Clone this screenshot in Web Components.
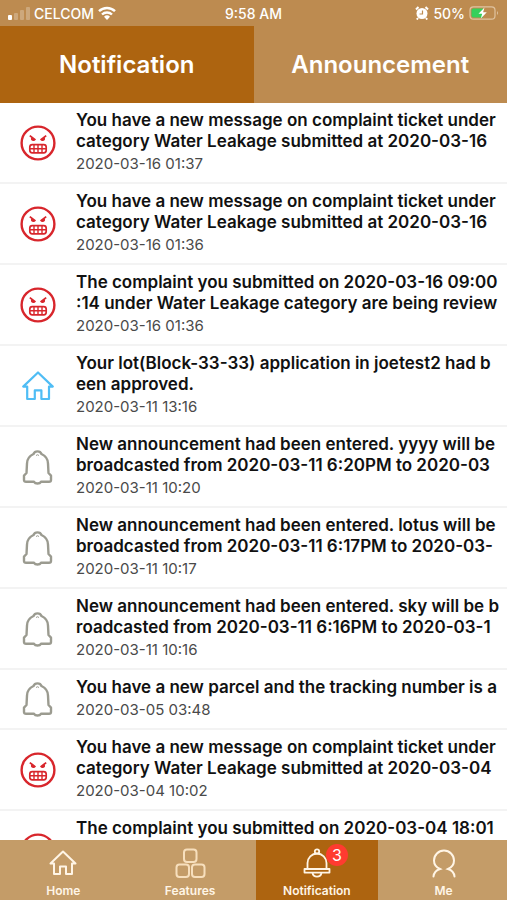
<!DOCTYPE html>
<html lang="en">
<head>
<meta charset="utf-8">
<meta name="viewport" content="width=device-width, initial-scale=1">
<title>Notification</title>
<style>
    body {
        margin: 0;
        font-family: Inter, "Liberation Sans", sans-serif;
        background: #fff;
    }
</style>
</head>
<body>
<notification-app></notification-app>

<script>
const ICONS = {
    angry: `
        <svg viewBox="0 0 36 36" width="36" height="36" fill="none" stroke="#d8262c" aria-hidden="true">
            <circle cx="18" cy="18" r="16.4" stroke-width="2.4"/>
            <path d="M9.8 10.6l5.6 4.400M26.200 10.600l-5.600 4.400" stroke-width="1.800"/>
            <path d="M11.300 12.400a2.300 2.300 0 1 0 4.300 2.200zM24.700 12.400a2.300 2.300 0 1 1-4.300 2.200z" fill="#d8262c" stroke="none"/>
            <rect x="9.800" y="19.600" width="16.400" height="8.200" rx="2.500" stroke-width="1.700"/>
            <path d="M10 23.700h16M14 19.600v8M18 19.600v8M22 19.600v8" stroke-width="1.400"/>
        </svg>`,
    house: `
        <svg viewBox="0 0 36 36" width="36" height="36" fill="none" stroke="#4fbdf5" stroke-width="2.200" stroke-linejoin="round" aria-hidden="true">
            <path d="M18 4.500L3.200 18.600h4V31h7.600v-8.600h6.600V31H29V18.600h3.800z"/>
        </svg>`,
    alertBell: `
        <svg viewBox="0 0 36 36" width="36" height="36" fill="none" stroke="#9b9b90" stroke-width="2.400" stroke-linejoin="round" aria-hidden="true">
            <path d="M13.500 5a4.200 3.800 0 0 1 8 0C25.500 7 28 10.500 28 14.500L28.500 24l2.500 2.600V31q0 1.800-2 1.800h-8q-1 1.700-3.500 1.700t-3.500-1.700H6q-2 0-2-1.800v-4.400L6.500 24 7 14.500C7 10.500 9.500 7 13.500 5z"/>
            <path d="M16 6.500q1.500-1.500 3 0" stroke-width="1"/>
        </svg>`,
    home: `
        <svg viewBox="0 0 32 32" width="32" height="32" fill="none" stroke="#fff5e6" stroke-width="2" stroke-linejoin="round" aria-hidden="true">
            <path d="M16 4.500L3.500 16.500H7V27h6v-7.500h6V27h6V16.500h3.500z"/>
        </svg>`,
    features: `
        <svg viewBox="0 0 32 32" width="32" height="32" fill="none" stroke="#f7dfbd" stroke-width="2" aria-hidden="true">
            <rect x="10" y="2.500" width="12.500" height="12.500" rx="3"/>
            <rect x="2.500" y="17.500" width="12.500" height="12.500" rx="3"/>
            <rect x="18" y="17.500" width="12.500" height="12.500" rx="3"/>
        </svg>`,
    bell: `
        <svg viewBox="0 0 32 32" width="32" height="32" fill="none" stroke="#fff5e6" stroke-width="1.800" stroke-linejoin="round" aria-hidden="true">
            <circle cx="16" cy="4.500" r="2.200"/>
            <path d="M6.500 22v-6a9.500 9.500 0 0 1 19 0v6"/>
            <rect x="3.500" y="22" width="25" height="3.600"/>
            <path d="M11.500 26a4.600 4.600 0 0 0 9 0"/>
        </svg>`,
    person: `
        <svg viewBox="0 0 32 32" width="32" height="32" fill="none" stroke="#fff5e6" stroke-width="2" stroke-linecap="round" aria-hidden="true">
            <path d="M5.500 29.500q.5-5.500 6.500-7.500C7.500 20 6 17 6 13.500a10 10 0 0 1 20 0c0 3.500-1.500 6.500-6 8.500q6 2 6.500 7.500"/>
        </svg>`
}

const NOTIFICATIONS = [
    { icon: 'angry', lines: ['You have a new message on complaint ticket under', 'category Water Leakage submitted at 2020-03-16'], date: '2020-03-16 01:37' },
    { icon: 'angry', lines: ['You have a new message on complaint ticket under', 'category Water Leakage submitted at 2020-03-16'], date: '2020-03-16 01:36' },
    { icon: 'angry', lines: ['The complaint you submitted on 2020-03-16 09:00', ':14 under Water Leakage category are being review'], date: '2020-03-16 01:36' },
    { icon: 'house', lines: ['Your lot(Block-33-33) application in joetest2 had b', 'een approved.'], date: '2020-03-11 13:16' },
    { icon: 'alertBell', lines: ['New announcement had been entered. yyyy will be', 'broadcasted from 2020-03-11 6:20PM to 2020-03'], date: '2020-03-11 10:20' },
    { icon: 'alertBell', lines: ['New announcement had been entered. lotus will be', 'broadcasted from 2020-03-11 6:17PM to 2020-03-'], date: '2020-03-11 10:17' },
    { icon: 'alertBell', lines: ['New announcement had been entered. sky will be b', 'roadcasted from 2020-03-11 6:16PM to 2020-03-1'], date: '2020-03-11 10:16' },
    { icon: 'alertBell', lines: ['You have a new parcel and the tracking number is a'], date: '2020-03-05 03:48' },
    { icon: 'angry', lines: ['You have a new message on complaint ticket under', 'category Water Leakage submitted at 2020-03-04'], date: '2020-03-04 10:02' },
    { icon: 'angry', lines: ['The complaint you submitted on 2020-03-04 18:01', ''], date: '' }
]

class BaseElement extends HTMLElement {
    constructor() {
        super()
        this.attachShadow({ mode: 'open' })
    }

    connectedCallback() {
        const template = document.createElement('template')
        template.innerHTML = this.getStyles() + this.getTemplate()
        this.shadowRoot.replaceChildren(template.content.cloneNode(true))
    }
}

class StatusBar extends BaseElement {
    getTemplate() {
        return `
            <div class="side">
                <svg viewBox="0 0 22 14" width="22" height="14" fill="#fff" aria-hidden="true">
                    <rect x="0" y="9" width="4" height="5" rx="1"/>
                    <g opacity=".25">
                        <rect x="6" y="7" width="4" height="7" rx="1"/>
                        <rect x="12" y="4" width="4" height="10" rx="1"/>
                        <rect x="18" y="1" width="4" height="13" rx="1"/>
                    </g>
                </svg>
                <span>CELCOM</span>
                <svg viewBox="0 0 18 14" width="18" height="14" fill="none" stroke="#fff" stroke-width="2.400" aria-hidden="true">
                    <path d="M1 5.200a11.500 11.500 0 0 1 16 0M4 8.500a7.200 7.200 0 0 1 10 0"/>
                    <path d="M9 14l-3-3.200a4.300 4.300 0 0 1 6 0z" fill="#fff" stroke="none"/>
                </svg>
            </div>
            <span>9:58 AM</span>
            <div class="side end">
                <svg viewBox="0 0 14 14" width="14" height="14" aria-hidden="true">
                    <circle cx="7" cy="7.500" r="5.500" fill="#fff"/>
                    <path d="M1 3.500L3.500 1M13 3.500L10.500 1M3 12l-1.200 1.500M11 12l1.200 1.500" stroke="#fff" stroke-width="2"/>
                    <path d="M7.500 4.500V8H4.500" fill="none" stroke="#bd8b50" stroke-width="1.200"/>
                </svg>
                <span>50%</span>
                <svg viewBox="0 0 30 14" width="30" height="14" aria-hidden="true">
                    <rect x="1" y=".8" width="25" height="12.400" rx="3.500" fill="none" stroke="#dfc3a0" stroke-width="1.200"/>
                    <path d="M28 5q2 2 0 4z" fill="#dfc3a0"/>
                    <path d="M4.500 2.500H14v9H4.500q-2 0-2-2v-5q0-2 2-2z" fill="#35d05b"/>
                    <path d="M15.500 1.500L9.500 7.800h3.700l-1.400 4.700 6-6.300h-3.700z" fill="#fff"/>
                </svg>
            </div>
        `
    }

    getStyles() {
        return `
        <style>
            :host {
                display: flex;
                align-items: center;
                height: 26px;
                padding: 0 8px;
                font-size: 14px;
                font-weight: 500;
                color: #fff;
            }
            .side {
                flex: 1;
                display: flex;
                align-items: center;
                gap: 4px;
            }
            .end {
                justify-content: flex-end;
            }
            svg {
                display: block;
            }
        </style>
        `
    }
}

class TabButton extends BaseElement {
    getTemplate() {
        return `<button type="button" aria-pressed="${this.hasAttribute('active')}"><slot></slot></button>`
    }

    getStyles() {
        return `
        <style>
            :host {
                display: block;
                flex: 1;
            }
            button {
                width: 100%;
                height: 77px;
                padding: 0;
                border: 0;
                background: none;
                color: #fff;
                font: 600 24px/28px Inter, "Liberation Sans", sans-serif;
            }
            :host([active]) button {
                background: #ad6410;
            }
        </style>
        `
    }
}

class NotificationItem extends BaseElement {
    getTemplate() {
        return `
            <div class="icon">${ICONS[this.getAttribute('icon')]}</div>
            <div class="text">
                <slot></slot>
                <slot name="date"></slot>
            </div>
        `
    }

    getStyles() {
        return `
        <style>
            :host {
                display: flex;
                align-items: center;
                padding: 7px 0 7px 20px;
                border-bottom: 2px solid #f3f3f3;
            }
            .icon {
                flex: none;
                width: 56px;
            }
            svg {
                display: block;
            }
            .text {
                min-width: 0;
            }
            ::slotted(p) {
                margin: 0;
                color: #111;
                font-size: 17px;
                line-height: 21px;
                font-weight: 600;
                white-space: pre;
            }
            ::slotted(time) {
                display: block;
                min-height: 23px;
                color: #4a4a4a;
                font-size: 15px;
                line-height: 23px;
            }
        </style>
        `
    }
}

class NotificationList extends BaseElement {
    getTemplate() {
        return NOTIFICATIONS.map(item => `
            <notification-item icon="${item.icon}">
                <p>${item.lines.join('<br>')}</p>
                <time slot="date">${item.date}</time>
            </notification-item>
        `).join('')
    }

    getStyles() {
        return `
        <style>
            :host {
                display: block;
                background: #fff;
            }
            notification-item:last-child {
                min-height: 65px;
            }
            notification-item:last-child p {
                min-height: 42px;
            }
        </style>
        `
    }
}

class NavItem extends BaseElement {
    getTemplate() {
        const badge = this.getAttribute('badge')
        return `
            <a href="#${this.getAttribute('icon')}">
                <span class="icon">
                    ${ICONS[this.getAttribute('icon')]}
                    ${badge ? `<span class="badge">${badge}</span>` : ''}
                </span>
                <span><slot></slot></span>
            </a>
        `
    }

    getStyles() {
        return `
        <style>
            :host {
                display: block;
                flex: 1;
                padding: 0 2px;
            }
            a {
                display: flex;
                flex-direction: column;
                align-items: center;
                gap: 4px;
                padding: 7px 0 1px;
                color: #fff5e6;
                font-size: 12px;
                line-height: 16px;
                font-weight: 600;
                text-decoration: none;
            }
            :host([active]) a {
                background: #ad6410;
            }
            .icon {
                position: relative;
            }
            svg {
                display: block;
            }
            .badge {
                position: absolute;
                left: 25px;
                top: -3px;
                width: 22px;
                height: 22px;
                border-radius: 50%;
                background: #ff3b30;
                color: #fff;
                font-size: 16px;
                line-height: 22px;
                font-weight: 400;
                text-align: center;
            }
        </style>
        `
    }
}

class NotificationApp extends BaseElement {
    getTemplate() {
        return `
            <header>
                <status-bar></status-bar>
                <div class="tabs">
                    <tab-button active>Notification</tab-button>
                    <tab-button>Announcement</tab-button>
                </div>
            </header>
            <main><notification-list></notification-list></main>
            <nav>
                <nav-item icon="home">Home</nav-item>
                <nav-item icon="features">Features</nav-item>
                <nav-item icon="bell" badge="3" active>Notification</nav-item>
                <nav-item icon="person">Me</nav-item>
            </nav>
        `
    }

    getStyles() {
        return `
        <style>
            :host {
                display: flex;
                flex-direction: column;
                height: 100vh;
            }
            header {
                background: #bd8b50;
            }
            .tabs,
            nav {
                display: flex;
            }
            main {
                flex: 1;
                min-height: 0;
                overflow: hidden;
            }
            nav {
                background: #c49c68;
            }
        </style>
        `
    }
}

customElements.define('status-bar', StatusBar)
customElements.define('tab-button', TabButton)
customElements.define('notification-item', NotificationItem)
customElements.define('notification-list', NotificationList)
customElements.define('nav-item', NavItem)
customElements.define('notification-app', NotificationApp)
</script>
</body>
</html>
